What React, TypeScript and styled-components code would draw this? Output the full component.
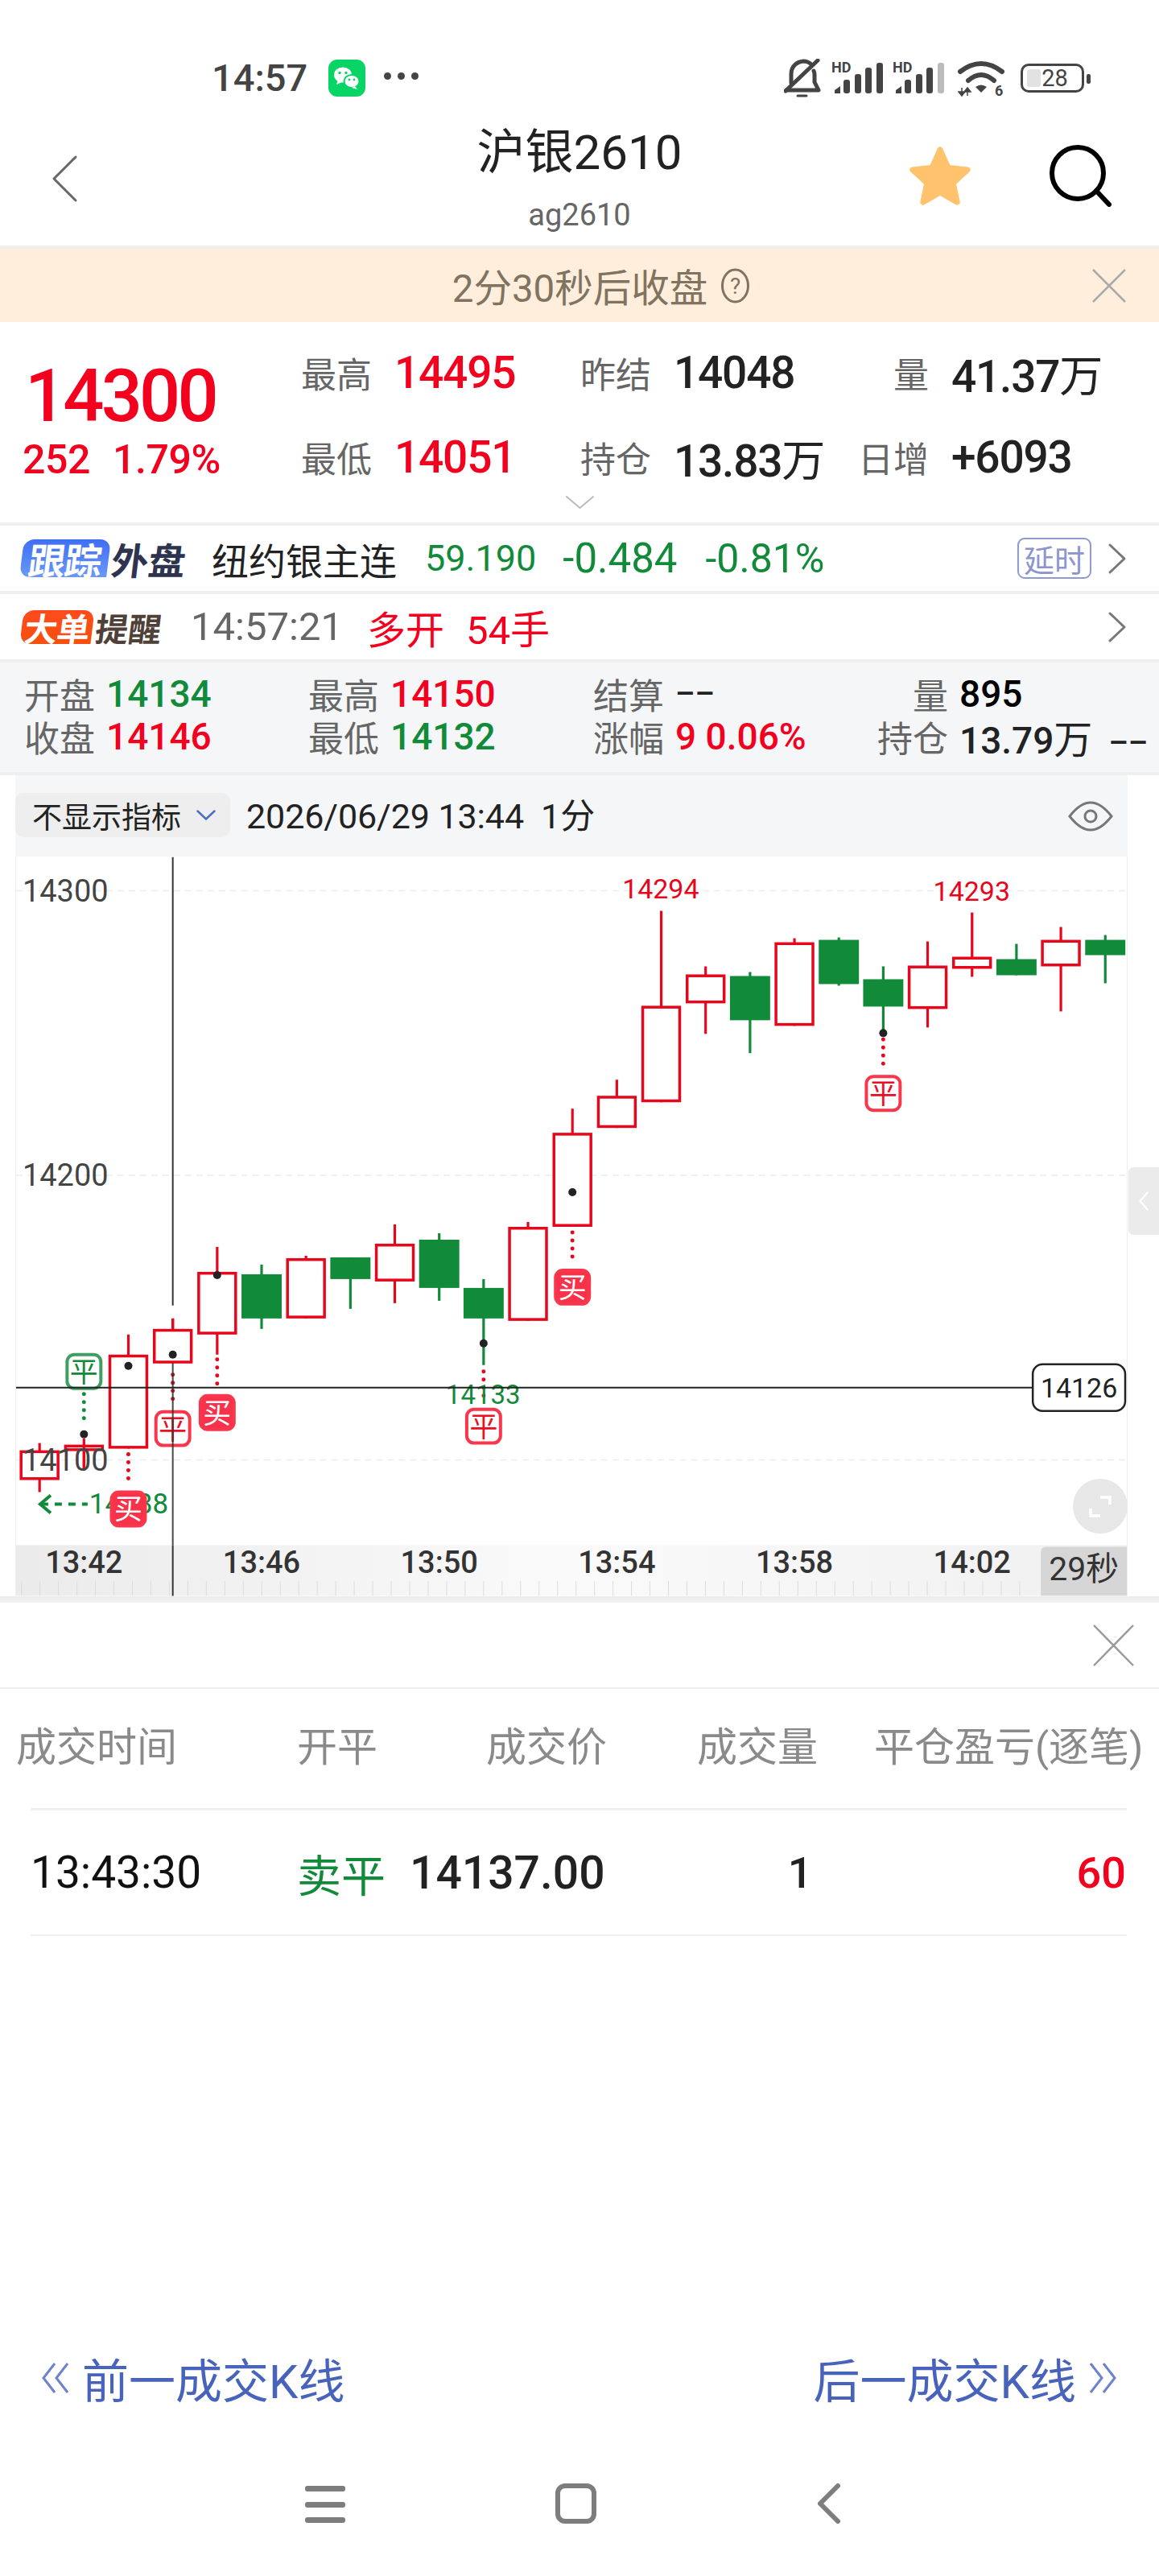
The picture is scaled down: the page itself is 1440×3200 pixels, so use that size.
import styled, { createGlobalStyle } from "styled-components";

const RED = "#f2001e";
const GREEN = "#118a3a";

const GlobalStyle = createGlobalStyle`
  html, body {
    margin: 0;
    padding: 0;
    background: #fff;
    font-family: Roboto, "Noto Sans CJK SC", sans-serif;
  }
  * { box-sizing: border-box; }
`;

const Page = styled.div`
  width: 1440px;
  height: 3200px;
  display: flex;
  flex-direction: column;
  overflow: hidden;
  background: #fff;
`;

/* status bar */
const StatusBar = styled.div`
  height: 135px;
  padding: 73px 93px 0 263px;
  display: flex;
  justify-content: space-between;
  align-items: flex-start;
`;

const StatusGroup = styled.div`
  display: flex;
  align-items: center;
  height: 47px;
`;

const Clock = styled.span`
  font-size: 47px;
  font-weight: 500;
  color: #444;
  margin-right: 26px;
`;

const MoreDots = styled.span`
  display: flex;
  gap: 8px;
  margin-left: 23px;
  margin-bottom: 4px;
  i {
    width: 9px;
    height: 9px;
    border-radius: 50%;
    background: #444;
  }
`;

const StatusSpacer = styled.span<{ $w: number }>`
  width: ${(p) => p.$w}px;
`;

const SignalSvg = styled.svg`
  align-self: flex-start;
`;

const WifiSvg = styled.svg`
  align-self: flex-start;
  margin-top: 2px;
`;

const BatteryBox = styled.div`
  position: relative;
  width: 79px;
  height: 36px;
  border: 3px solid #444;
  border-radius: 10px;
  margin-left: 20px;
  display: flex;
  align-items: center;
  justify-content: center;
  font-size: 29px;
  color: #444;
  &::before {
    content: "";
    position: absolute;
    left: 5px;
    top: 4px;
    bottom: 4px;
    width: 17px;
    background: #e2e2e2;
    border-radius: 3px;
  }
  &::after {
    content: "";
    position: absolute;
    right: -11px;
    top: 10px;
    width: 5px;
    height: 12px;
    background: #444;
    border-radius: 2px;
  }
  span {
    position: relative;
    left: 3px;
  }
`;

/* title bar */
const TitleBar = styled.div`
  height: 170px;
  display: grid;
  grid-template-columns: 1fr auto 1fr;
  padding: 0 58px 0 64px;
`;

const TitleBlock = styled.div`
  display: flex;
  flex-direction: column;
  align-items: center;
`;

const Title = styled.div`
  font-size: 60px;
  line-height: 84px;
  color: #222;
  margin-top: 13px;
  position: relative;
  left: -3px;
`;

const SubTitle = styled.div`
  font-size: 38px;
  line-height: 50px;
  color: #666;
  margin-top: 10px;
  position: relative;
  left: -3px;
`;

const BackSlot = styled.div`
  padding-top: 57px;
`;

const TitleActions = styled.div`
  display: flex;
  justify-content: flex-end;
  gap: 94px;
  padding-top: 44px;
  align-items: flex-start;
`;

/* countdown banner */
const Banner = styled.div`
  height: 95px;
  border-top: 4px solid #f0efed;
  background: #ffeedc;
  display: grid;
  grid-template-columns: 1fr auto 1fr;
  align-items: center;
  padding: 0 40px 0 0;
  color: #80735f;
  font-size: 47.5px;
`;

const BannerText = styled.div`
  display: flex;
  align-items: center;
  gap: 16px;
  padding-left: 94px;
`;

const BannerClose = styled.div`
  grid-column: 3;
  justify-self: end;
  display: flex;
`;

/* quote block */
const Quote = styled.div`
  height: 249px;
  padding-top: 10px;
  display: flex;
  flex-direction: column;
`;

const QuoteGrid = styled.div`
  display: grid;
  grid-template-columns: 346px 347px 345px 1fr;
  grid-template-rows: 106px 104px;
  padding-left: 28px;
`;

const LastPrice = styled.div`
  font-size: 90px;
  font-weight: 500;
  letter-spacing: -3.8px;
  color: ${RED};
  padding: 30px 0 0 3px;
  line-height: 106px;
`;

const Change = styled.div`
  font-size: 50px;
  font-weight: 500;
  letter-spacing: -0.4px;
  color: ${RED};
  display: flex;
  gap: 28px;
  align-items: center;
  padding-top: 6px;
`;

const Stat = styled.div`
  display: flex;
  align-items: center;
  gap: 28px;
`;

const StatLabel = styled.span<{ $right?: boolean }>`
  width: 88px;
  font-size: 44px;
  color: #666;
  text-align: ${(p) => (p.$right ? "right" : "left")};
  white-space: nowrap;
`;

const StatValue = styled.span<{ $red?: boolean }>`
  font-size: 55px;
  font-weight: 500;
  letter-spacing: -1.2px;
  color: ${(p) => (p.$red ? RED : "#222")};
  white-space: nowrap;
`;

const StatUnit = styled.span`
  font-size: 54px;
  font-weight: 400;
  letter-spacing: 0;
`;

const ChevronSlot = styled.div`
  display: flex;
  justify-content: center;
  margin-top: -5px;
`;

/* info rows */
const InfoRow = styled.div<{ $h: number }>`
  height: ${(p) => p.$h}px;
  border-top: 4px solid #efefef;
  display: flex;
  align-items: center;
  padding: 0 40px 0 27px;
  white-space: nowrap;
`;

const Logo = styled.div<{ $w: number; $h: number; $from: string; $to: string; $size: number }>`
  width: ${(p) => p.$w}px;
  height: ${(p) => p.$h}px;
  border-radius: 13px 13px 0 13px;
  background: linear-gradient(${(p) => p.$from}, ${(p) => p.$to});
  color: #fff;
  font-size: ${(p) => p.$size}px;
  font-weight: 700;
  letter-spacing: -1px;
  transform: skewX(-7deg);
  display: flex;
  align-items: center;
  justify-content: center;
  flex: none;
`;

const LogoTail = styled.div<{ $w: number; $color: string; $size: number }>`
  width: ${(p) => p.$w}px;
  margin-left: 4px;
  color: ${(p) => p.$color};
  font-size: ${(p) => p.$size}px;
  font-weight: 700;
  transform: skewX(-7deg);
  text-align: center;
  flex: none;
`;

const RowText = styled.span<{ $color: string; $left: number; $size?: number }>`
  color: ${(p) => p.$color};
  margin-left: ${(p) => p.$left}px;
  font-size: ${(p) => p.$size ?? 46}px;
`;

const DelayTag = styled.div`
  margin-left: auto;
  width: 92px;
  height: 51px;
  border: 2px solid #9199d2;
  border-radius: 9px;
  color: #8d95cf;
  font-size: 38px;
  display: flex;
  align-items: center;
  justify-content: center;
`;

const RowArrow = styled.div<{ $auto?: boolean }>`
  margin-left: ${(p) => (p.$auto ? "auto" : "20px")};
  display: flex;
`;

/* candle summary */
const Ohlc = styled.div`
  height: 140px;
  border-top: 4px solid #efefef;
  background: #f5f6f8;
  padding: 12px 0 0 30px;
  display: grid;
  grid-template-columns: 353px 354px 353px 1fr;
  grid-auto-rows: 53px;
`;

const OhlcCell = styled.div`
  display: flex;
  align-items: center;
  gap: 14px;
  white-space: nowrap;
`;

const OhlcLabel = styled.span<{ $right?: boolean }>`
  width: 88px;
  font-size: 44px;
  color: #666;
  text-align: ${(p) => (p.$right ? "right" : "left")};
`;

const OhlcValue = styled.span<{ $color: string }>`
  font-size: 46px;
  font-weight: 500;
  color: ${(p) => p.$color};
`;

const OhlcDash = styled.span`
  font-size: 38px;
  font-weight: 500;
  color: #222;
`;

const OhlcUnit = styled.span`
  font-weight: 400;
  font-size: 48px;
  margin-right: 20px;
`;

/* chart */
const ChartSection = styled.div`
  position: relative;
  padding: 0 39px 0 19px;
  border-top: 4px solid #efefef;
`;

const ChartHead = styled.div`
  height: 101px;
  background: #f5f6f8;
  display: flex;
  align-items: center;
  padding: 0 18px 0 0;
`;

const IndicatorPill = styled.div`
  width: 267px;
  height: 55px;
  background: #eee;
  border-radius: 10px;
  display: flex;
  align-items: center;
  gap: 18px;
  padding-left: 21px;
  font-size: 37px;
  color: #222;
  margin-bottom: 2px;
`;

const HeadText = styled.span`
  margin: 0 0 8px 20px;
  font-size: 43px;
  letter-spacing: -0.1px;
  color: #222;
  white-space: pre;
`;

const HeadEye = styled.div`
  margin-left: auto;
  display: flex;
`;

const ChartCanvas = styled.svg`
  display: block;
  width: 1382px;
  height: 919px;
  border-left: 1px solid #eee;
  border-right: 1px solid #eee;
`;

const ChartBase = styled.div`
  height: 8px;
  margin: 0 -39px 0 -19px;
  background: linear-gradient(#ebebeb, #f4f4f4);
`;

const SideTab = styled.div`
  position: absolute;
  right: 0;
  top: 487px;
  width: 38px;
  height: 84px;
  background: #ebebeb;
  border-radius: 6px 0 0 6px;
  display: flex;
  align-items: center;
  justify-content: center;
`;

const ExpandButton = styled.div`
  position: absolute;
  left: 1333px;
  top: 874px;
  width: 68px;
  height: 68px;
  border-radius: 50%;
  background: #e7e7e7;
  display: flex;
  align-items: center;
  justify-content: center;
`;

/* trade panel */
const Panel = styled.div`
  flex: 1;
  display: flex;
  flex-direction: column;
`;

const PanelClose = styled.div`
  height: 107px;
  border-bottom: 2px solid #eee;
  display: flex;
  justify-content: flex-end;
  align-items: flex-start;
  padding: 26px 30px 0 0;
`;

const TradeHead = styled.div`
  height: 148px;
  display: grid;
  grid-template-columns: 349px 235px 262px 220px 1fr;
  align-items: center;
  padding: 0 0 12px 20px;
  font-size: 50px;
  color: #8a8a8a;
  white-space: nowrap;
`;

const TradeRow = styled.div`
  margin: 0 40px 0 38px;
  height: 159px;
  border-top: 3px solid #f0f0f0;
  border-bottom: 2px solid #f0f0f0;
  display: grid;
  grid-template-columns: 331px 140px 362px 246px 1fr;
  align-items: center;
  padding: 0 1px 0 0;
  white-space: nowrap;
`;

const TradeCell = styled.span<{ $color?: string; $size?: number; $bold?: boolean; $align?: string }>`
  color: ${(p) => p.$color ?? "#222"};
  font-size: ${(p) => p.$size ?? 54}px;
  font-weight: ${(p) => (p.$bold ? 500 : 400)};
  text-align: ${(p) => p.$align ?? "left"};
`;

const PagerRow = styled.div`
  margin-top: auto;
  height: 80px;
  display: flex;
  justify-content: space-between;
  align-items: center;
  padding: 0 51px 6px 50px;
`;

const PagerLink = styled.div`
  display: flex;
  align-items: center;
  gap: 14px;
  color: #4763bb;
  font-size: 58px;
  white-space: nowrap;
`;

const SystemNav = styled.div`
  height: 203px;
  padding: 91px 0 0 379px;
  display: flex;
  align-items: flex-start;
`;

const NavMenu = styled.div`
  width: 50px;
  height: 46px;
  display: flex;
  flex-direction: column;
  justify-content: space-between;
  i {
    height: 7px;
    border-radius: 3px;
    background: #7d7d7d;
  }
`;

const NavHome = styled.div`
  width: 51px;
  height: 50px;
  margin: -3px 0 0 261px;
  border: 6px solid #7d7d7d;
  border-radius: 12px;
`;

const NavBack = styled.div`
  margin: -3px 0 0 272px;
  display: flex;
`;

/* drawings */
const Chevron = ({ w, h, dir, color, sw }: { w: number; h: number; dir: "l" | "r" | "d"; color: string; sw: number }) => {
  const p = sw;
  const pts =
    dir === "l"
      ? `${w - p},${p} ${p},${h / 2} ${w - p},${h - p}`
      : dir === "r"
        ? `${p},${p} ${w - p},${h / 2} ${p},${h - p}`
        : `${p},${p} ${w / 2},${h - p} ${w - p},${p}`;
  return (
    <svg width={w} height={h} viewBox={`0 0 ${w} ${h}`}>
      <polyline points={pts} fill="none" stroke={color} strokeWidth={sw} strokeLinecap="round" strokeLinejoin="round" />
    </svg>
  );
};

const Cross = ({ w, h, color }: { w: number; h: number; color: string }) => (
  <svg width={w} height={h} viewBox={`0 0 ${w} ${h}`}>
    <path d={`M2 2L${w - 2} ${h - 2}M${w - 2} 2L2 ${h - 2}`} stroke={color} strokeWidth="2.5" fill="none" />
  </svg>
);

const WeChat = () => (
  <svg width="46" height="46" viewBox="0 0 46 46">
    <rect width="46" height="46" rx="11" fill="#08d565" />
    <ellipse cx="18" cy="19" rx="11" ry="9.5" fill="#fff" />
    <path d="M12 25l-2 6 7-3z" fill="#fff" />
    <ellipse cx="29" cy="27" rx="9.5" ry="8" fill="#fff" stroke="#08d565" strokeWidth="2" />
    <path d="M33 33l3 4-7-2z" fill="#fff" />
    <circle cx="14" cy="16.5" r="1.7" fill="#08d565" />
    <circle cx="22" cy="16.5" r="1.7" fill="#08d565" />
    <circle cx="26" cy="25" r="1.4" fill="#08d565" />
    <circle cx="32" cy="25" r="1.4" fill="#08d565" />
  </svg>
);

const BellMuted = () => (
  <svg width="46" height="48" viewBox="0 0 46 48" fill="none" stroke="#444" strokeWidth="5" strokeLinecap="round" strokeLinejoin="round">
    <path d="M9 30V19C9 10 15 4 24 3c4 0 8 2 10 4" />
    <path d="M37 15c1 2 1 3 1 5v9l5 10H3" />
    <path d="M2 40L42 2" />
    <path d="M17 46h11" strokeWidth="3" />
  </svg>
);

const Signal = ({ weak }: { weak?: boolean }) => (
  <SignalSvg width="63" height="44" viewBox="0 -4 63 44">
    <text x="-1" y="13" fontSize="18" fontWeight="700" fill="#444">HD</text>
    <path d="M3 39V35l7-5v9z" fill="#444" />
    <rect x="14" y="22" width="8" height="17" rx="3" fill="#444" />
    <rect x="28" y="15" width="8" height="24" rx="3" fill="#444" />
    <rect x="41" y="7" width="8" height="32" rx="3" fill="#444" />
    <rect x="55" y="1" width="8" height="38" rx="3" fill={weak ? "#bbb" : "#444"} />
  </SignalSvg>
);

const Wifi = () => (
  <WifiSvg width="58" height="50" viewBox="0 0 58 50">
    <g fill="none" stroke="#444" strokeWidth="6" strokeLinecap="round">
      <path d="M3 14Q29 -6 55 14" />
      <path d="M13 25Q29 11 45 25" />
    </g>
    <path d="M22 33Q29 28 36 33L29 40Z" fill="#444" />
    <path d="M5 34v10M5 44l-4-5h8zM12 44V34M12 34l-4 5h8z" fill="#444" stroke="#444" strokeWidth="1.5" />
    <text x="46" y="44" fontSize="18" fontWeight="700" fill="#444">6</text>
  </WifiSvg>
);

const Star = () => (
  <svg width="80" height="80" viewBox="0 0 80 80">
    <polygon
      points="40,7 50,29.2 74.2,31.9 56.2,48.3 61.2,72.1 40,60 18.8,72.1 23.8,48.3 5.8,31.9 30,29.2"
      fill="#ffc36e"
      stroke="#ffc36e"
      strokeWidth="7"
      strokeLinejoin="round"
    />
  </svg>
);

const Search = () => (
  <svg width="80" height="78" viewBox="0 0 80 78" fill="none" stroke="#000" strokeWidth="6">
    <circle cx="37" cy="36" r="32" />
    <path d="M60 58L76 75" strokeLinecap="round" />
  </svg>
);

const Help = () => (
  <svg width="37" height="46" viewBox="0 0 37 46">
    <ellipse cx="18.5" cy="23" rx="16" ry="20" fill="none" stroke="#80735f" strokeWidth="3" />
    <text x="18.5" y="33" textAnchor="middle" fontSize="28" fill="#80735f">?</text>
  </svg>
);

const EyeIcon = () => (
  <svg width="56" height="38" viewBox="0 0 56 38" fill="none" stroke="#777" strokeWidth="3">
    <path d="M2 19C12 6 20 2 28 2s16 4 26 17C44 32 36 36 28 36S12 32 2 19Z" />
    <circle cx="28" cy="19" r="7" />
  </svg>
);

/* chart data, in reference page pixels: high, body top, body bottom, low */
const candles: [boolean, number, number, number, number][] = [
  [true, 1793, 1802, 1839, 1854],
  [true, 1787, 1795, 1803, 1825],
  [true, 1658, 1683, 1800, 1800],
  [true, 1638, 1651, 1694, 1694],
  [true, 1549, 1580, 1658, 1683],
  [false, 1571, 1583, 1638, 1651],
  [true, 1560, 1563, 1638, 1638],
  [false, 1562, 1562, 1589, 1626],
  [true, 1521, 1545, 1592, 1619],
  [false, 1532, 1540, 1600, 1616],
  [false, 1589, 1600, 1638, 1696],
  [true, 1518, 1524, 1641, 1641],
  [true, 1377, 1407, 1524, 1524],
  [true, 1341, 1361, 1401, 1401],
  [true, 1131, 1249, 1369, 1369],
  [true, 1200, 1210, 1246, 1284],
  [false, 1207, 1212, 1267, 1308],
  [true, 1165, 1170, 1274, 1274],
  [false, 1164, 1167, 1222, 1224],
  [false, 1200, 1216, 1250, 1282],
  [true, 1169, 1199, 1253, 1276],
  [true, 1133, 1188, 1203, 1213],
  [false, 1172, 1191, 1211, 1211],
  [true, 1151, 1167, 1200, 1256],
  [false, 1161, 1167, 1186, 1221],
];

const candleX = (i: number) => 48.2 + 55.25 * i;

const DARK_RED = "#e6071d";

const stems = [
  { i: 1, y1: 1732, y2: 1772, color: GREEN },
  { i: 2, y1: 1807, y2: 1847, color: DARK_RED },
  { i: 3, y1: 1708, y2: 1748, color: DARK_RED },
  { i: 4, y1: 1689, y2: 1729, color: DARK_RED },
  { i: 10, y1: 1704, y2: 1744, color: DARK_RED },
  { i: 12, y1: 1531, y2: 1571, color: DARK_RED },
  { i: 19, y1: 1291, y2: 1331, color: DARK_RED },
];

const dots = [
  { i: 1, y: 1782 },
  { i: 2, y: 1697 },
  { i: 3, y: 1683 },
  { i: 4, y: 1584 },
  { i: 10, y: 1669 },
  { i: 12, y: 1481 },
  { i: 19, y: 1283 },
];

const flags = [
  { i: 1, y: 1681, text: "平", kind: "green" },
  { i: 2, y: 1852, text: "买", kind: "solid" },
  { i: 3, y: 1752, text: "平", kind: "outline" },
  { i: 4, y: 1732, text: "买", kind: "solid" },
  { i: 10, y: 1749, text: "平", kind: "outline" },
  { i: 12, y: 1576, text: "买", kind: "solid" },
  { i: 19, y: 1335, text: "平", kind: "outline" },
];

const gridLines = [
  { y: 1106, label: "14300" },
  { y: 1460, label: "14200" },
  { y: 1814, label: "14100" },
];

const timeTicks = [
  { i: 1, label: "13:42" },
  { i: 5, label: "13:46" },
  { i: 9, label: "13:50" },
  { i: 13, label: "13:54" },
  { i: 17, label: "13:58" },
  { i: 21, label: "14:02" },
];

const minorTicks = Array.from({ length: 55 }, (_, n) => 25.7 + n * 23);

const CHAIR_X = candleX(3);
const CHAIR_Y = 1724;

const Flag = ({ x, y, text, kind }: { x: number; y: number; text: string; kind: string }) => {
  const stroke = kind === "green" ? "#3f9f63" : "#f8364c";
  const fill = kind === "solid" ? "#f8324a" : "#fff";
  const ink = kind === "solid" ? "#fff" : kind === "green" ? GREEN : "#ea1024";
  return (
    <g>
      <rect x={x - 21} y={y + 2} width={42} height={42} rx={9} fill={fill} stroke={stroke} strokeWidth={4} />
      <text x={x} y={y + 36} textAnchor="middle" fontSize={35} fill={ink}>{text}</text>
    </g>
  );
};

const KChart = () => (
  <ChartCanvas viewBox="19 1064 1382 919">
    <defs>
      <linearGradient id="axisFade" x1="0" x2="1" y1="0" y2="0">
        <stop offset="0" stopColor="#ebebeb" />
        <stop offset="0.5" stopColor="#fafafa" />
        <stop offset="1" stopColor="#f0f0f0" />
      </linearGradient>
    </defs>
    {gridLines.map((g) => (
      <line key={g.y} x1={19} x2={1401} y1={g.y} y2={g.y} stroke="#ececf1" strokeWidth={1.5} strokeDasharray="8 6" />
    ))}
    <line x1={CHAIR_X} x2={CHAIR_X} y1={1064} y2={1622} stroke="#333" strokeWidth={2} />

    {candles.map(([up, high, top, bottom, low], i) => {
      const x = candleX(i);
      const color = up ? "#e6071d" : GREEN;
      return (
        <g key={i}>
          <line x1={x} x2={x} y1={high} y2={low} stroke={color} strokeWidth={3.2} />
          {up ? (
            <rect x={x - 23} y={top + 1.75} width={46} height={bottom - top - 3.5} fill="#fff" stroke={color} strokeWidth={3.5} />
          ) : (
            <rect x={x - 25} y={top} width={50} height={bottom - top} fill={color} />
          )}
        </g>
      );
    })}
    {/* wick of the thin candle runs through its body */}
    <line x1={candleX(1)} x2={candleX(1)} y1={1795} y2={1825} stroke="#e6071d" strokeWidth={3.2} />

    {stems.map((s) => (
      <line
        key={s.i}
        x1={candleX(s.i)}
        x2={candleX(s.i)}
        y1={s.y1}
        y2={s.y2}
        stroke={s.color}
        strokeWidth={5}
        strokeLinecap="round"
        strokeDasharray="0 10"
      />
    ))}
    {dots.map((d) => (
      <circle key={d.i} cx={candleX(d.i)} cy={d.y} r={5} fill="#222" />
    ))}

    <text x={821} y={1115} textAnchor="middle" fontSize={34} fill="#e6071d">14294</text>
    <text x={1208} y={1118} textAnchor="middle" fontSize={34} fill="#e6071d">14293</text>
    <text x={600} y={1744} textAnchor="middle" fontSize={33} fill={GREEN}>14133</text>

    <path d="M62 1858L49 1869L62 1880" fill="none" stroke={GREEN} strokeWidth={4} />
    <line x1={50} x2={108} y1={1869} y2={1869} stroke={GREEN} strokeWidth={4} strokeDasharray="9 8" />
    <text x={110} y={1881} fontSize={35} fill={GREEN}>14088</text>

    {flags.map((f) => (
      <Flag key={f.i} x={candleX(f.i)} y={f.y} text={f.text} kind={f.kind} />
    ))}

    <line x1={CHAIR_X} x2={CHAIR_X} y1={1638} y2={1651} stroke="#e6071d" strokeWidth={3.2} />
    <line x1={CHAIR_X} x2={CHAIR_X} y1={1694} y2={1983} stroke="#333" strokeOpacity={0.9} strokeWidth={2} />
    <line x1={19} x2={1284} y1={CHAIR_Y} y2={CHAIR_Y} stroke="#222" strokeWidth={2} />

    {gridLines.map((g) => (
      <text key={g.y} x={27} y={g.y + 13} fontSize={38} fill="#444">{g.label}</text>
    ))}

    <rect x={1284} y={1695} width={115} height={58} rx={12} fill="#fff" stroke="#222" strokeWidth={2.5} />
    <text x={1341.5} y={1736} textAnchor="middle" fontSize={34} fill="#222">14126</text>

    <rect x={19} y={1920} width={1382} height={63} fill="url(#axisFade)" />
    {minorTicks.map((x) => (
      <line key={x} x1={x} x2={x} y1={1965} y2={1983} stroke="#dcdcdc" strokeWidth={1} />
    ))}
    <line x1={CHAIR_X} x2={CHAIR_X} y1={1920} y2={1983} stroke="#333" strokeWidth={2} />
    {timeTicks.map((t) => (
      <text key={t.i} x={candleX(t.i)} y={1955} textAnchor="middle" fontSize={38} fontWeight={500} fill="#333">{t.label}</text>
    ))}
    <path d="M1294 1983V1928a6 6 0 0 1 6-6H1401V1983Z" fill="#d6d6d6" />
    <text x={1304} y={1964} fontSize={41} fill="#333">29秒</text>
  </ChartCanvas>
);

export default function App() {
  return (
    <Page>
      <GlobalStyle />
      <StatusBar>
        <StatusGroup>
          <Clock>14:57</Clock>
          <WeChat />
          <MoreDots><i /><i /><i /></MoreDots>
        </StatusGroup>
        <StatusGroup>
          <BellMuted />
          <StatusSpacer $w={14} />
          <Signal />
          <StatusSpacer $w={13} />
          <Signal weak />
          <StatusSpacer $w={17} />
          <Wifi />
          <BatteryBox><span>28</span></BatteryBox>
        </StatusGroup>
      </StatusBar>

      <TitleBar>
        <BackSlot><Chevron w={33} h={60} dir="l" color="#666" sw={3} /></BackSlot>
        <TitleBlock>
          <Title>沪银2610</Title>
          <SubTitle>ag2610</SubTitle>
        </TitleBlock>
        <TitleActions>
          <Star />
          <Search />
        </TitleActions>
      </TitleBar>

      <Banner>
        <div />
        <BannerText>
          2分30秒后收盘
          <Help />
        </BannerText>
        <BannerClose><Cross w={44} h={44} color="#aaa" /></BannerClose>
      </Banner>

      <Quote>
        <QuoteGrid>
          <LastPrice>14300</LastPrice>
          <Stat><StatLabel>最高</StatLabel><StatValue $red>14495</StatValue></Stat>
          <Stat><StatLabel>昨结</StatLabel><StatValue>14048</StatValue></Stat>
          <Stat><StatLabel $right>量</StatLabel><StatValue>41.37<StatUnit>万</StatUnit></StatValue></Stat>
          <Change><span>252</span><span>1.79%</span></Change>
          <Stat><StatLabel>最低</StatLabel><StatValue $red>14051</StatValue></Stat>
          <Stat><StatLabel>持仓</StatLabel><StatValue>13.83<StatUnit>万</StatUnit></StatValue></Stat>
          <Stat><StatLabel $right>日增</StatLabel><StatValue>+6093</StatValue></Stat>
        </QuoteGrid>
        <ChevronSlot><Chevron w={37} h={18} dir="d" color="#bbb" sw={2} /></ChevronSlot>
      </Quote>

      <InfoRow $h={85}>
        <Logo $w={108} $h={47} $from="#3f6ef5" $to="#6a98f8" $size={46}>跟踪</Logo>
        <LogoTail $w={90} $color="#2e3450" $size={46}>外盘</LogoTail>
        <RowText $color="#222" $left={34}>纽约银主连</RowText>
        <RowText $color={GREEN} $left={35} $size={45}>59.190</RowText>
        <RowText $color={GREEN} $left={33} $size={51}>-0.484</RowText>
        <RowText $color={GREEN} $left={35} $size={50}>-0.81%</RowText>
        <DelayTag>延时</DelayTag>
        <RowArrow><Chevron w={24} h={40} dir="r" color="#777" sw={3} /></RowArrow>
      </InfoRow>

      <InfoRow $h={85}>
        <Logo $w={88} $h={42} $from="#ff4a1c" $to="#f6500e" $size={41}>大单</Logo>
        <LogoTail $w={81} $color="#4f4038" $size={41}>提醒</LogoTail>
        <RowText $color="#666" $left={37} $size={49}>14:57:21</RowText>
        <RowText $color={RED} $left={30} $size={48}>多开</RowText>
        <RowText $color={RED} $left={27} $size={49}>54手</RowText>
        <RowArrow $auto><Chevron w={24} h={40} dir="r" color="#777" sw={3} /></RowArrow>
      </InfoRow>

      <Ohlc>
        <OhlcCell><OhlcLabel>开盘</OhlcLabel><OhlcValue $color={GREEN}>14134</OhlcValue></OhlcCell>
        <OhlcCell><OhlcLabel>最高</OhlcLabel><OhlcValue $color={RED}>14150</OhlcValue></OhlcCell>
        <OhlcCell><OhlcLabel>结算</OhlcLabel><OhlcDash>––</OhlcDash></OhlcCell>
        <OhlcCell><OhlcLabel $right>量</OhlcLabel><OhlcValue $color="#000">895</OhlcValue></OhlcCell>
        <OhlcCell><OhlcLabel>收盘</OhlcLabel><OhlcValue $color={RED}>14146</OhlcValue></OhlcCell>
        <OhlcCell><OhlcLabel>最低</OhlcLabel><OhlcValue $color={GREEN}>14132</OhlcValue></OhlcCell>
        <OhlcCell><OhlcLabel>涨幅</OhlcLabel><OhlcValue $color={RED}>9 0.06%</OhlcValue></OhlcCell>
        <OhlcCell>
          <OhlcLabel $right>持仓</OhlcLabel>
          <OhlcValue $color="#222">13.79<OhlcUnit>万</OhlcUnit><OhlcDash>––</OhlcDash></OhlcValue>
        </OhlcCell>
      </Ohlc>

      <ChartSection>
        <ChartHead>
          <IndicatorPill>
            不显示指标
            <Chevron w={26} h={15} dir="d" color="#4a6cc4" sw={2.5} />
          </IndicatorPill>
          <HeadText>2026/06/29 13:44  1分</HeadText>
          <HeadEye><EyeIcon /></HeadEye>
        </ChartHead>
        <KChart />
        <ChartBase />
        <SideTab><Chevron w={14} h={26} dir="l" color="#fff" sw={2.5} /></SideTab>
        <ExpandButton>
          <svg width="28" height="27" viewBox="0 0 28 27" fill="none" stroke="#fff" strokeWidth="3.5">
            <path d="M14 2H26V11M2 16V25H14" />
          </svg>
        </ExpandButton>
      </ChartSection>

      <Panel>
        <PanelClose><Cross w={53} h={54} color="#999" /></PanelClose>
        <TradeHead>
          <span>成交时间</span>
          <span>开平</span>
          <span>成交价</span>
          <span>成交量</span>
          <span>平仓盈亏(逐笔)</span>
        </TradeHead>
        <TradeRow>
          <TradeCell $color="#111" $size={55}>13:43:30</TradeCell>
          <TradeCell $color={GREEN} $size={55}>卖平</TradeCell>
          <TradeCell $size={57} $bold>14137.00</TradeCell>
          <TradeCell $align="center" $bold>1</TradeCell>
          <TradeCell $color={RED} $align="right" $bold>60</TradeCell>
        </TradeRow>

        <PagerRow>
          <PagerLink>
            <svg width="38" height="40" viewBox="0 0 38 40" fill="none" stroke="#6d83cd" strokeWidth="3">
              <path d="M18 2L4 20L18 38M34 2L20 20L34 38" />
            </svg>
            前一成交K线
          </PagerLink>
          <PagerLink>
            后一成交K线
            <svg width="38" height="40" viewBox="0 0 38 40" fill="none" stroke="#6d83cd" strokeWidth="3">
              <path d="M4 2L18 20L4 38M20 2L34 20L20 38" />
            </svg>
          </PagerLink>
        </PagerRow>
        <SystemNav>
          <NavMenu><i /><i /><i /></NavMenu>
          <NavHome />
          <NavBack>
            <svg width="31" height="50" viewBox="0 0 31 50" fill="none" stroke="#7d7d7d" strokeWidth="6" strokeLinecap="round" strokeLinejoin="round">
              <path d="M28 3L6 25L28 47" />
            </svg>
          </NavBack>
        </SystemNav>
      </Panel>
    </Page>
  );
}
